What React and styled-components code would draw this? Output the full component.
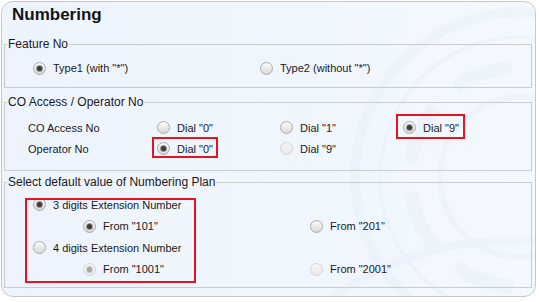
import React from "react"
import styled, { createGlobalStyle } from "styled-components"

const GlobalStyle = createGlobalStyle`
  body {
    margin: 0;
    background: #fff;
    font-family: "Liberation Sans", Arial, sans-serif;
  }
`

const Panel = styled.div`
  position: relative;
  box-sizing: border-box;
  width: 535px;
  height: 296px;
  margin: 1px 0 0 1px;
  padding: 3px 3px 0 2px;
  border: 1px solid #c4c8cc;
  border-radius: 12px;
  background: linear-gradient(to right, #edf4fd 0%, #f0f6fe 55%, #f4f9fe 100%);
  overflow: hidden;
`

const Watermark = styled.svg`
  position: absolute;
  right: 0;
  top: 0;
  width: 535px;
  height: 296px;
  pointer-events: none;
`

const Content = styled.div`
  position: relative;
`

const Title = styled.h1`
  margin: 0 0 0 8px;
  font-size: 17px;
  line-height: 20px;
  font-weight: bold;
  color: #141414;
`

const Group = styled.fieldset`
  margin: ${p => p.$top}px 0 0 0;
  padding: 0 0 ${p => p.$bottom}px 0;
  border: 1px solid #c9cbcd;
  min-inline-size: 0;

  legend {
    margin-left: 2px;
    padding: 0 1px;
    font-size: 12px;
    line-height: 14px;
    color: #1a1a1a;
  }
`

const Rows = styled.div`
  position: relative;
  margin-top: ${p => p.$top}px;
`

const Row = styled.div`
  display: flex;
  align-items: center;
  height: ${p => p.$h || 21}px;
  padding-left: ${p => p.$indent}px;
`

const Cell = styled.div`
  width: ${p => p.$w}px;
  flex: none;
  display: flex;
  align-items: center;
`

const Grid = styled.div`
  display: grid;
  grid-template-columns: 129px 123px 123px 1fr;
  grid-auto-rows: 21px;
  align-items: center;
  padding-left: 23px;
  margin-top: 8px;
`

const Label = styled.span`
  font-size: 11px;
  color: #1a1a1a;
`

const Option = styled.label`
  position: relative;
  display: inline-flex;
  align-items: center;
  gap: 7px;
  height: 14px;
  font-size: 11px;
  color: #1a1a1a;
  white-space: nowrap;
`

const Radio = styled.span`
  position: relative;
  box-sizing: border-box;
  width: 13px;
  height: 13px;
  border-radius: 50%;
  flex: none;
  border: 1px solid ${p => (p.$disabled ? "#d3d5d7" : "#a9abad")};
  background: ${p =>
    p.$disabled
      ? "linear-gradient(#f6f6f6, #e9e9e9)"
      : "linear-gradient(#fbfbfb, #d9d9d9)"};

  &::after {
    content: "";
    display: ${p => (p.$checked ? "block" : "none")};
    position: absolute;
    left: 3px;
    top: 3px;
    width: 5px;
    height: 5px;
    border-radius: 50%;
    background: ${p => (p.$disabled ? "#a6a6a6" : "#3c3c3c")};
    box-shadow: 0 0 0 1px ${p => (p.$disabled ? "#cfcfcf" : "#9a9a9a")};
  }
`

const Mark = styled.span`
  position: absolute;
  box-sizing: border-box;
  left: ${p => p.$x}px;
  top: ${p => p.$y}px;
  width: ${p => p.$w}px;
  height: ${p => p.$h}px;
  border: 2px solid #e5141e;
  pointer-events: none;
`

const Choice = ({ label, checked, disabled, children }) => (
  <Option>
    <Radio $checked={checked} $disabled={disabled} />
    {label}
    {children}
  </Option>
)

export default function App() {
  return (
    <>
      <GlobalStyle />
      <Panel>
        <Watermark viewBox="0 0 535 296">
          <g fill="none" stroke="#e6eef8" opacity="0.45">
            <circle cx="520" cy="175" r="165" strokeWidth="10" />
            <circle cx="520" cy="175" r="140" strokeWidth="4" />
            <circle cx="520" cy="175" r="110" strokeWidth="14" strokeDasharray="60 30" />
            <circle cx="520" cy="175" r="80" strokeWidth="6" />
            <path d="M330 296 Q430 230 535 240" strokeWidth="8" />
          </g>
        </Watermark>
        <Content>
          <Title>Numbering</Title>

          <Group $top={12} $bottom={8}>
            <legend>Feature No</legend>
            <Rows $top={6}>
              <Row $h={22} $indent={28}>
                <Cell $w={227}>
                  <Choice label={'Type1 (with "*")'} checked />
                </Cell>
                <Choice label={'Type2 (without "*")'} />
              </Row>
            </Rows>
          </Group>

          <Group $top={7} $bottom={11}>
            <legend>CO Access / Operator No</legend>
            <Grid>
              <Label>CO Access No</Label>
              <Choice label={'Dial "0"'} />
              <Choice label={'Dial "1"'} />
              <Choice label={'Dial "9"'} checked>
                <Mark $x={-7} $y={-7} $w={69} $h={25} />
              </Choice>
              <Label>Operator No</Label>
              <Choice label={'Dial "0"'} checked>
                <Mark $x={-5} $y={-5} $w={66} $h={21} />
              </Choice>
              <Choice label={'Dial "9"'} disabled />
            </Grid>
          </Group>

          <Group $top={4} $bottom={7}>
            <legend>Select default value of Numbering Plan</legend>
            <Rows $top={5}>
              <Row $indent={28}>
                <Choice label="3 digits Extension Number" checked />
              </Row>
              <Row $h={22} $indent={78}>
                <Cell $w={227}>
                  <Choice label={'From "101"'} checked />
                </Cell>
                <Choice label={'From "201"'} />
              </Row>
              <Row $indent={28}>
                <Choice label="4 digits Extension Number" />
              </Row>
              <Row $h={22} $indent={78}>
                <Cell $w={227}>
                  <Choice label={'From "1001"'} checked disabled />
                </Cell>
                <Choice label={'From "2001"'} disabled />
              </Row>
              <Mark $x={20} $y={4} $w={171} $h={85} />
            </Rows>
          </Group>
        </Content>
      </Panel>
    </>
  )
}
